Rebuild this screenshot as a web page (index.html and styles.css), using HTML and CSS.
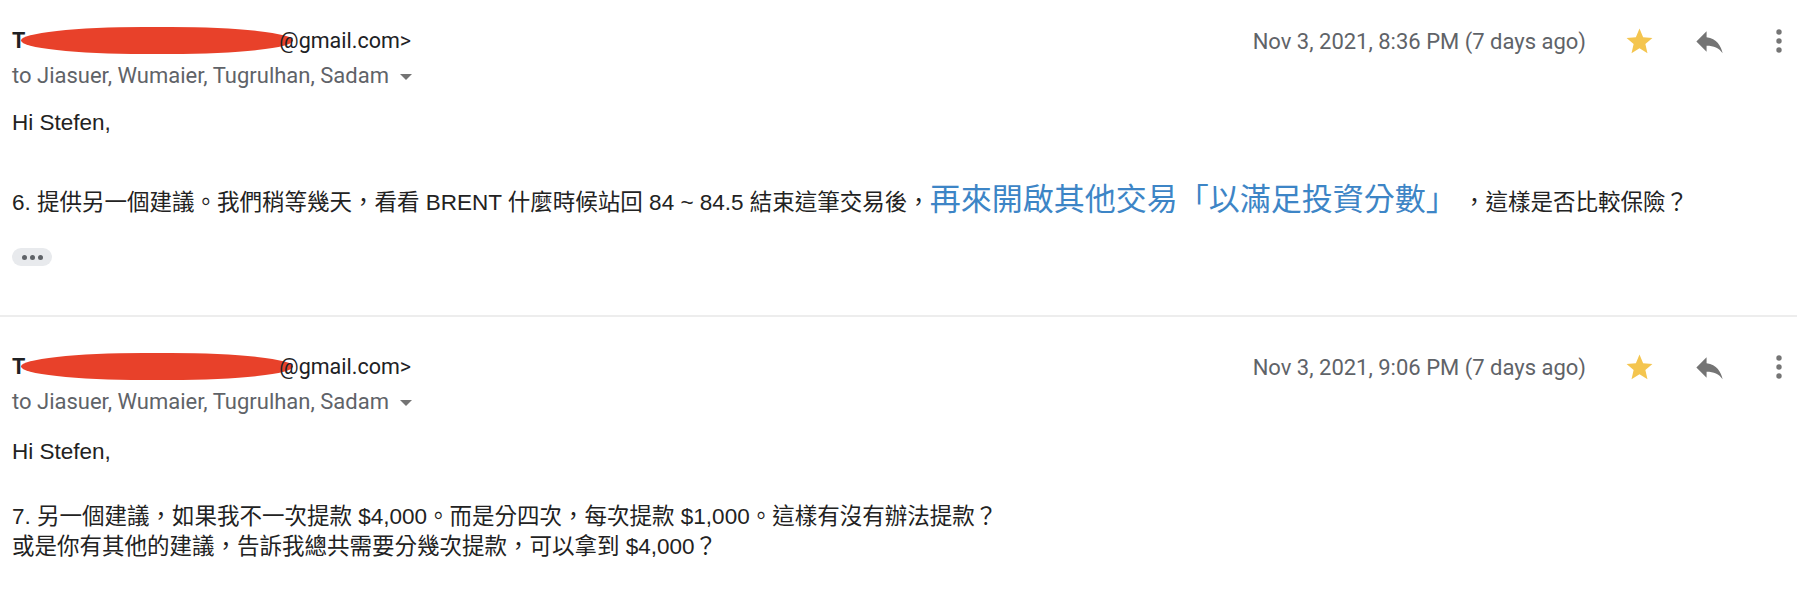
FILE: index.html
```html
<!DOCTYPE html>
<html lang="zh-Hant">
<head>
    <meta charset="UTF-8">
    <meta name="viewport" content="width=device-width, initial-scale=1.0">
    <title>Thread</title>
    <link rel="stylesheet" href="styles.css">
</head>
<body>
    <div class="thread">

        <div class="message first">
            <div class="header">
                <div class="who">
                    <div class="sender"><b>T</b><span class="redacted"></span>@gmail.com&gt;</div>
                    <div class="recipients">to Jiasuer, Wumaier, Tugrulhan, Sadam <span class="caret"></span></div>
                </div>
                <div class="meta">
                    <span class="date">Nov 3, 2021, 8:36 PM (7 days ago)</span>
                    <span class="icon-btn">
                        <svg width="31" height="31" viewBox="0 0 24 24"><path fill="#f4c54f" d="M12 17.27L18.18 21l-1.64-7.03L22 9.24l-7.19-.61L12 2 9.19 8.63 2 9.24l5.46 4.73L5.82 21z"/></svg>
                    </span>
                    <span class="icon-btn">
                        <svg width="35" height="35" viewBox="0 0 24 24"><path fill="#747474" d="M10 9V5l-7 7 7 7v-4.1c5 0 8.5 1.6 11 5.1-1-5-4-10-11-11z"/></svg>
                    </span>
                    <span class="icon-btn">
                        <svg width="12" height="28" viewBox="0 0 12 28"><circle cx="6" cy="5" r="2.7" fill="#757575"/><circle cx="6" cy="14" r="2.7" fill="#757575"/><circle cx="6" cy="23" r="2.7" fill="#757575"/></svg>
                    </span>
                </div>
            </div>
            <div class="body">
                <div class="line">Hi Stefen,</div>
                <div class="line big">6. 提供另一個建議。我們稍等幾天，看看 BRENT 什麼時候站回 84 ~ 84.5 結束這筆交易後，<span class="highlight">再來開啟其他交易「以滿足投資分數」</span> ，這樣是否比較保險？</div>
                <div class="more"><i></i><i></i><i></i></div>
            </div>
        </div>

        <div class="message">
            <div class="header">
                <div class="who">
                    <div class="sender"><b>T</b><span class="redacted"></span>@gmail.com&gt;</div>
                    <div class="recipients">to Jiasuer, Wumaier, Tugrulhan, Sadam <span class="caret"></span></div>
                </div>
                <div class="meta">
                    <span class="date">Nov 3, 2021, 9:06 PM (7 days ago)</span>
                    <span class="icon-btn">
                        <svg width="31" height="31" viewBox="0 0 24 24"><path fill="#f4c54f" d="M12 17.27L18.18 21l-1.64-7.03L22 9.24l-7.19-.61L12 2 9.19 8.63 2 9.24l5.46 4.73L5.82 21z"/></svg>
                    </span>
                    <span class="icon-btn">
                        <svg width="35" height="35" viewBox="0 0 24 24"><path fill="#747474" d="M10 9V5l-7 7 7 7v-4.1c5 0 8.5 1.6 11 5.1-1-5-4-10-11-11z"/></svg>
                    </span>
                    <span class="icon-btn">
                        <svg width="12" height="28" viewBox="0 0 12 28"><circle cx="6" cy="5" r="2.7" fill="#757575"/><circle cx="6" cy="14" r="2.7" fill="#757575"/><circle cx="6" cy="23" r="2.7" fill="#757575"/></svg>
                    </span>
                </div>
            </div>
            <div class="body">
                <div class="line">Hi Stefen,</div>
                <div class="line gap">7. 另一個建議，如果我不一次提款 $4,000。而是分四次，每次提款 $1,000。這樣有沒有辦法提款？</div>
                <div class="line">或是你有其他的建議，告訴我總共需要分幾次提款，可以拿到 $4,000？</div>
            </div>
        </div>

    </div>
</body>
</html>
```

FILE: styles.css
```css
body {
    margin: 0;
    background: #ffffff;
    font-family: Roboto, "Noto Sans CJK TC", sans-serif;
    color: #222222;
}

.thread {
    margin-right: 19px;
}

.message {
    padding: 27px 0 0 12px;
}

.message.first {
    padding-bottom: 49px;
    border-bottom: 2px solid #ededed;
}

.message + .message {
    padding-top: 36px;
}

.header {
    display: flex;
    justify-content: space-between;
    align-items: flex-start;
}

.sender {
    font-size: 21.5px;
    line-height: 24px;
    color: #202124;
    display: flex;
    align-items: center;
}

.sender b {
    font-weight: bold;
}

.redacted {
    display: inline-block;
    width: 272px;
    height: 27px;
    margin-left: -4px;
    margin-right: -14px;
    background: #e8412a;
    border-radius: 45% / 50%;
}

.recipients {
    margin-top: 10px;
    font-size: 22px;
    line-height: 24px;
    color: #5f6368;
}

.caret {
    display: inline-block;
    margin-left: 6px;
    vertical-align: middle;
    border-left: 6px solid transparent;
    border-right: 6px solid transparent;
    border-top: 6px solid #747474;
}

.meta {
    display: flex;
    align-items: center;
    gap: 34px;
    height: 24px;
    margin-top: 2px;
}

.date {
    font-size: 22px;
    color: #5f6368;
    margin-right: 1px;
}

.icon-btn {
    width: 36px;
    height: 36px;
    display: flex;
    align-items: center;
    justify-content: center;
}

.body {
    margin-top: 20px;
    font-family: "Liberation Sans", Arial, "Noto Sans CJK TC", sans-serif;
    font-size: 22.5px;
}

.message + .message .body {
    margin-top: 23px;
}

.line {
    line-height: 30px;
}

.line.big {
    margin-top: 44px;
    line-height: 36px;
}

.line.gap {
    margin-top: 35px;
}

.highlight {
    font-size: 31px;
    color: #3d85c6;
}

.more {
    margin-top: 27px;
    width: 40px;
    height: 18px;
    border-radius: 9px;
    background: #e8eaed;
    display: flex;
    align-items: center;
    justify-content: center;
    gap: 3px;
}

.more i {
    width: 5px;
    height: 5px;
    border-radius: 50%;
    background: #5f6368;
}
```
